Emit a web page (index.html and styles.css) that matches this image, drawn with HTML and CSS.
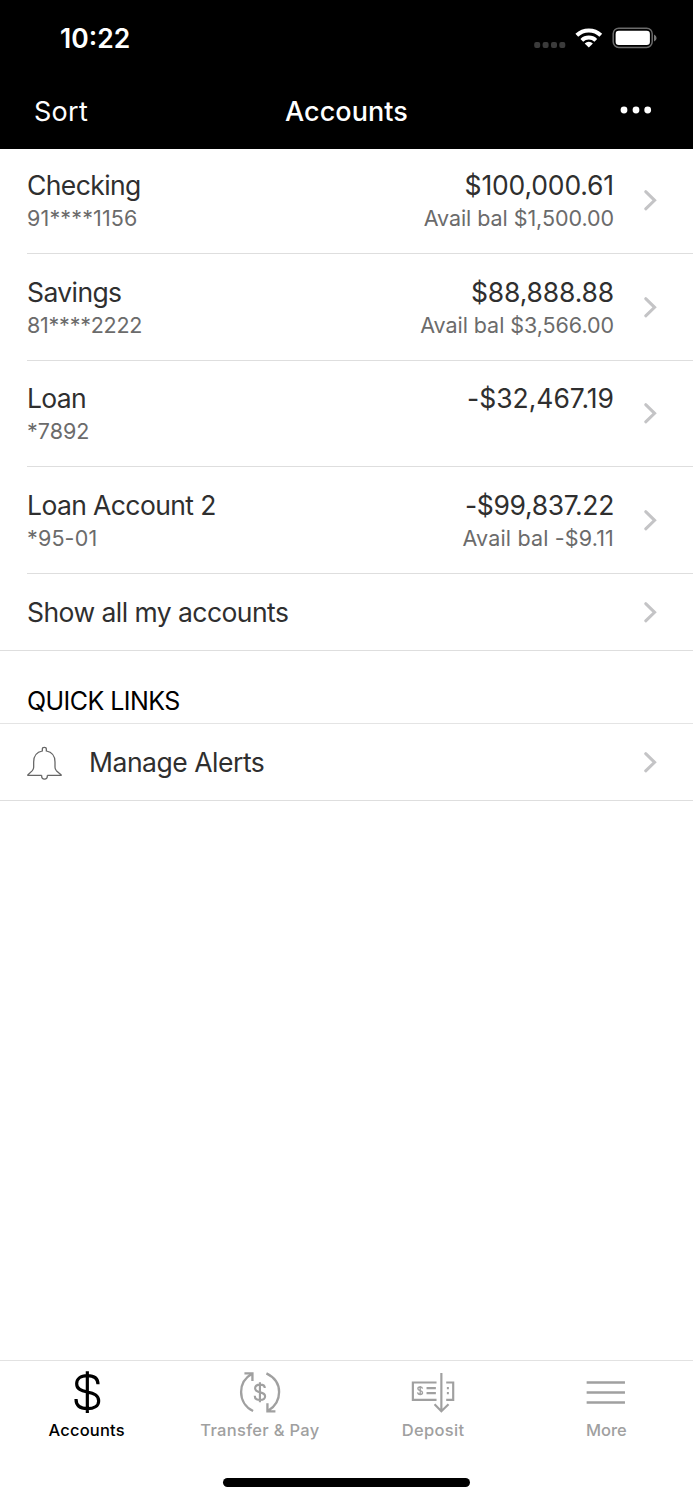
FILE: index.html
```
<!DOCTYPE html>
<html lang="en">
<head>
<meta charset="utf-8">
<title>Accounts</title>
<link rel="stylesheet" href="styles.css">
</head>
<body>
<svg class="defs" aria-hidden="true">
  <symbol id="chevron" viewBox="0 0 14 22"><path d="M2.7 2.7 11.600 11.300l-8.900 8.500" fill="none" stroke="#c4c4c6" stroke-width="3" stroke-linecap="round" stroke-linejoin="miter"/></symbol>
</svg>
<div class="screen">
  <header class="header">
    <div class="status">
      <span class="time">10:22</span>
      <svg class="status-icons" viewBox="530 20 130 36">
        <g fill="#3b3b3b"><rect x="534.2" y="42" width="6" height="6" rx="2"/><rect x="542.6" y="42" width="6" height="6" rx="2"/><rect x="551" y="42" width="6" height="6" rx="2"/><rect x="559.3" y="42" width="6" height="6" rx="2"/></g>
        <g fill="none" stroke="#fff" stroke-width="4"><path d="M576.8 35.3a17.3 17.3 0 0 1 24 0"/><path d="M581.8 40.4a10.2 10.2 0 0 1 14 0"/></g>
        <path d="M588.8 47.6l-4.1-4.2a6.2 6.2 0 0 1 8.2 0z" fill="#fff"/>
        <rect x="613.2" y="28.2" width="39" height="19.2" rx="5.6" fill="none" stroke="#6b6b6b" stroke-width="1.5"/>
        <rect x="615.6" y="30.8" width="34.3" height="14.2" rx="3.2" fill="#fff"/>
        <path d="M654 34.4q2.6 1 2.6 3.5t-2.6 3.5z" fill="#777"/>
      </svg>
    </div>
    <nav class="nav">
      <span class="sort">Sort</span>
      <h1 class="title">Accounts</h1>
      <svg class="dots" viewBox="0 0 34 10"><circle cx="5" cy="5" r="3.4"/><circle cx="17" cy="5" r="3.4"/><circle cx="28.7" cy="5" r="3.4"/></svg>
    </nav>
  </header>
  <main class="content">
    <section class="accounts">
      <div class="account first">
        <div class="info"><div class="name ls-b">Checking</div><div class="sub ls-c">91****1156</div></div>
        <div class="money"><div class="name ls-d">$100,000.61</div><div class="sub ls-e">Avail bal $1,500.00</div></div>
        <svg class="chev"><use href="#chevron"/></svg>
      </div>
      <div class="account">
        <div class="info"><div class="name ls-b">Savings</div><div class="sub ls-f">81****2222</div></div>
        <div class="money"><div class="name ls-d">$88,888.88</div><div class="sub ls-e">Avail bal $3,566.00</div></div>
        <svg class="chev"><use href="#chevron"/></svg>
      </div>
      <div class="account short">
        <div class="info"><div class="name ls-a">Loan</div><div class="sub">*7892</div></div>
        <div class="money"><div class="name ls-g">-$32,467.19</div></div>
        <svg class="chev"><use href="#chevron"/></svg>
      </div>
      <div class="account">
        <div class="info"><div class="name ls-b">Loan Account 2</div><div class="sub ls-c">*95-01</div></div>
        <div class="money"><div class="name ls-h">-$99,837.22</div><div class="sub ls-j">Avail bal -$9.11</div></div>
        <svg class="chev"><use href="#chevron"/></svg>
      </div>
    </section>
    <div class="link">
      <span class="name ls-i">Show all my accounts</span>
      <svg class="chev"><use href="#chevron"/></svg>
    </div>
    <h2 class="section">QUICK LINKS</h2>
    <div class="link alerts">
      <svg class="bell" viewBox="30 28 120 108"><path d="M80 119H39Q37 119 39 117L52 105Q56 101 56 95V79C56 61 66 49 82 46V40Q82 35 88 35Q94 35 94 40V46C110 49 120 61 120 79V95Q120 101 124 105L138 117Q140 119 138 119H97M80 119V122A8.5 8.5 0 0 0 97 122V119"/></svg>
      <span class="name ls-k">Manage Alerts</span>
      <svg class="chev"><use href="#chevron"/></svg>
    </div>
  </main>
  <footer class="tabs">
    <div class="tab active">
      <svg class="icon" viewBox="50 18 180 162" stroke-width="9.5"><path d="M141 49V174M173 88C173 70 160 62 141 62C120 62 109 72 109 86C109 103 123 107 141 111C160 115 175 120 175 138C175 153 161 161 141 161C119 161 107 151 107 132"/></svg>
      <span class="label ls-l">Accounts</span>
    </div>
    <div class="tab">
      <svg class="icon" viewBox="119.7 18 180 162" stroke-width="7"><path d="M189 168C166 157 153 135 153 111C153 88 164 68 186 56M163 55H187V78M229 55C254 67 267 88 267 111C267 135 255 155 234 167M232 145V169H256"/><path stroke-width="6.5" d="M209.5 82V142M224 99Q224 89 210 89Q195 89 195 100Q195 109 210 112Q225 115 225 124Q225 135 210 135Q194 135 194 122"/></svg>
      <span class="label ls-m">Transfer &amp; Pay</span>
    </div>
    <div class="tab">
      <svg class="icon" viewBox="39.4 18 180 162" stroke-width="6.5"><path d="M140 82.500H69V134.500H140M154.500 54V168M134 148L154.500 169L176 148M169 82.500H190V134.500H169M110 99.500H138M110 114.500H138M171 99.500H177M171 114.500H177"/><path stroke-width="4" d="M91 93V121M98 101Q97 96 91 96Q84 96 84 101Q84 105 91 107Q98 109 98 113Q98 118 91 118Q84 118 83 112"/></svg>
      <span class="label ls-m">Deposit</span>
    </div>
    <div class="tab">
      <svg class="icon" viewBox="49.1 18 180 162" stroke-width="7"><path d="M81 82.500H196M81 112.500H196M81 142.500H196"/></svg>
      <span class="label">More</span>
    </div>
  </footer>
  <div class="home"><div class="home-bar"></div></div>
</div>
</body>
</html>
```

FILE: styles.css
```
* { box-sizing: border-box; }
body { margin: 0; background: #fff; font-family: Inter, "Liberation Sans", sans-serif; }
svg { display: block; flex: none; }
.defs { width: 0; height: 0; position: absolute; }
.screen { width: 693px; height: 1500px; display: flex; flex-direction: column; background: #fff; }

.header { height: 149px; background: #000; color: #fff; }
.status { height: 74px; padding: 20px 33px 0 60px; display: flex; justify-content: space-between; align-items: flex-start; }
.time { font-size: 26.5px; font-weight: 600; line-height: 36px; }
.status-icons { width: 130px; height: 36px; }
.nav { height: 75px; padding: 0 38px 0 34px; display: grid; grid-template-columns: 1fr auto 1fr; align-items: center; }
.sort { font-size: 27px; line-height: 36px; letter-spacing: .3px; }
.title { margin: 0; padding-left: 4px; font-size: 27px; font-weight: 500; line-height: 36px; letter-spacing: .05px; }
.dots { width: 34px; height: 10px; margin: 0 2px 3px 0; justify-self: end; fill: #fff; }

.content { flex: 1; }
.account { height: 107px; margin-left: 27px; padding: 22px 36px 0 0; display: flex; border-bottom: 1px solid #dedede; }
.account.first { height: 105px; padding-top: 20px; }
.account.short { height: 106px; padding-top: 21px; }
.info { flex: 1; }
.money { text-align: right; margin-right: 29px; }
.account .chev { align-self: flex-start; margin-top: 20px; }
.name { font-size: 26.5px; line-height: 33px; color: #2f2f2f; }
.sub { font-size: 21.5px; line-height: 32px; color: #6b6b6b; }
.chev { width: 14px; height: 22px; }
.link { height: 77px; padding: 0 36px 0 27px; display: flex; align-items: center; border-bottom: 1px solid #dedede; }
.link .name { flex: 1; }
.alerts .name { padding-top: 1px; }
.section { height: 73px; margin: 0; padding: 34px 27px 0; font-size: 25px; font-weight: 400; line-height: 32px; letter-spacing: -.55px; color: #000; border-bottom: 1px solid #e4e4e4; }
.bell { width: 40px; height: 36px; margin: 1px 24px 0 -2px; fill: none; stroke: #666; stroke-width: 3.8; }

.ls-a { letter-spacing: -.7px; }
.ls-b { letter-spacing: -.6px; }
.ls-c { letter-spacing: .15px; }
.ls-d { letter-spacing: -.16px; }
.ls-e { letter-spacing: -.06px; }
.ls-f { letter-spacing: -.24px; }
.ls-g { letter-spacing: -.02px; }
.ls-h { letter-spacing: -.34px; }
.ls-i { letter-spacing: -.55px; }
.ls-j { letter-spacing: .16px; }
.ls-k { letter-spacing: -.47px; }
.ls-l { letter-spacing: .2px; }
.ls-m { letter-spacing: .3px; }

.tabs { height: 101px; display: grid; grid-template-columns: repeat(4, 1fr); border-top: 1px solid #e2e2e2; }
.tab { display: flex; flex-direction: column; align-items: center; color: #a0a0a0; }
.tab.active { color: #000; }
.icon { width: 60px; height: 54px; fill: none; stroke: currentColor; }
.label { font-size: 16.5px; font-weight: 500; line-height: 30px; }
.home { height: 39px; padding-top: 17px; display: flex; justify-content: center; }
.home-bar { width: 247px; height: 8.5px; border-radius: 5px; background: #000; }
```
